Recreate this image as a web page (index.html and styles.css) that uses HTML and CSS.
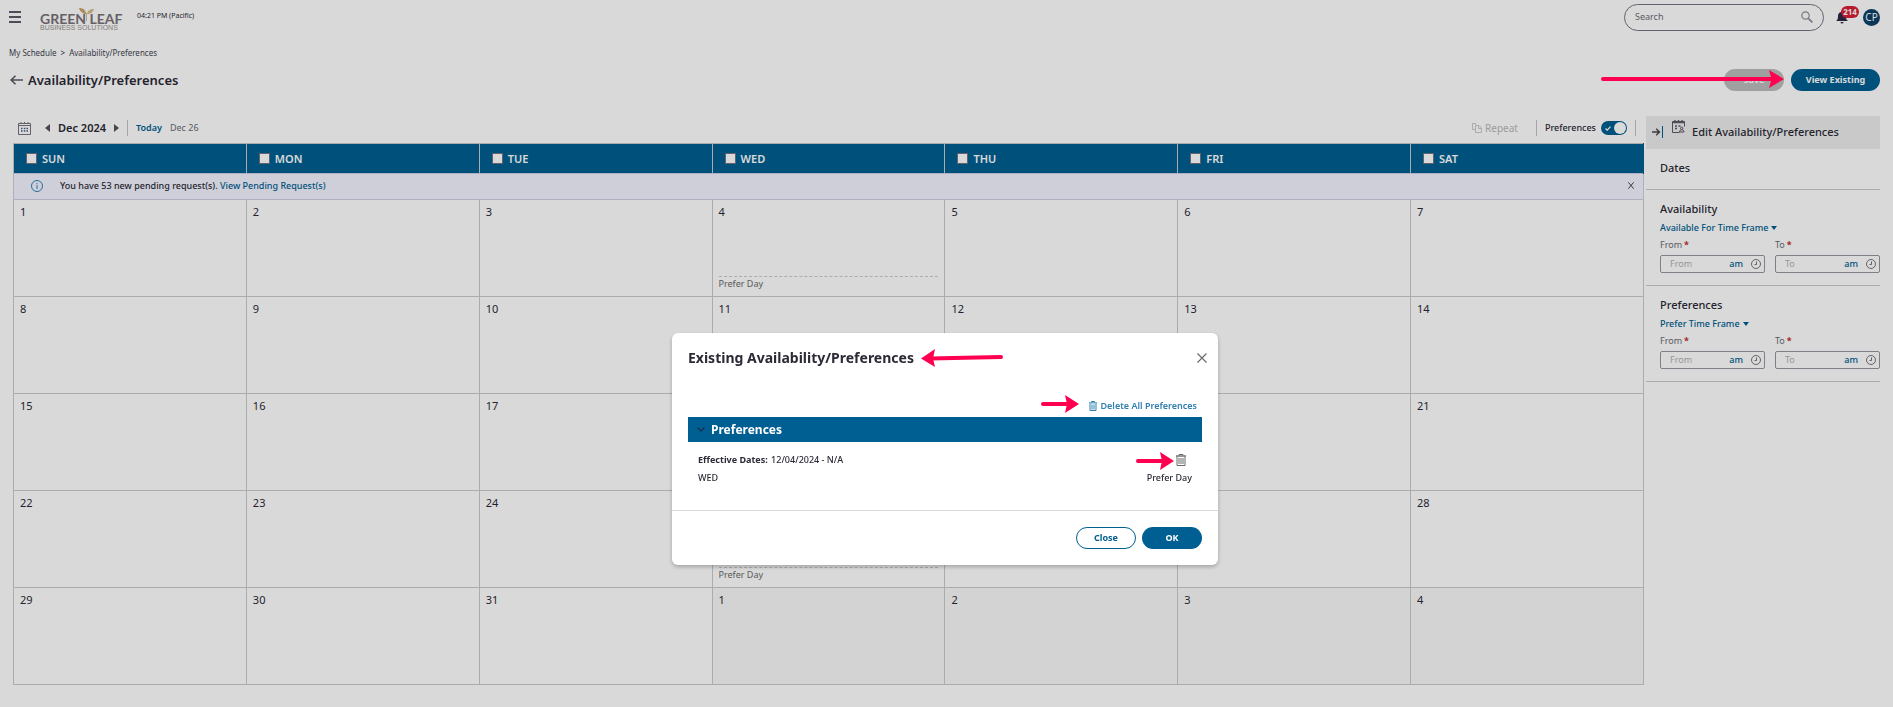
FILE: index.html
```html
<!DOCTYPE html>
<html lang="en">
<head>
    <meta charset="UTF-8">
    <title>Availability/Preferences</title>
    <link rel="stylesheet" href="styles.css">
</head>
<body>

<header class="topbar">
    <button class="icon-btn topbar__menu" type="button" aria-label="Menu">
        <svg width="12" height="12" viewBox="0 0 12 12"><path d="M0 1h12M0 6h12M0 11h12" stroke="#5d5967" stroke-width="2"/></svg>
    </button>
    <a class="logo" href="#">
        <svg class="logo__leaf" width="18" height="13" viewBox="0 0 18 13">
            <path d="M8 6C6 6 2 4 1 0c4 0 7 2 7 6z" fill="#c9a468"/>
            <path d="M9 6c0-3 3-5 7-5-1 3-3 5-7 5z" fill="#d9bd8b"/>
            <path d="M8.500 5v8" stroke="#d9bd8b"/>
        </svg>
        <span class="logo__name">GREEN LEAF</span>
        <span class="logo__sub">BUSINESS SOLUTIONS</span>
    </a>
    <span class="topbar__time">04:21 PM (Pacific)</span>

    <form class="search" action="#">
        <input class="search__input" type="text" placeholder="Search" aria-label="Search">
        <button class="icon-btn" type="submit" aria-label="Search">
            <svg width="12" height="12" viewBox="0 0 12 12" fill="none"><circle cx="4.5" cy="4.5" r="3.7" stroke="#8f8f9c" stroke-width="1.2"/><path d="M7.3 7.3l4 4" stroke="#8f8f9c" stroke-width="1.8"/></svg>
        </button>
    </form>
    <button class="icon-btn bell" type="button" aria-label="Notifications">
        <svg width="12" height="14" viewBox="0 0 12 14" fill="#2b2a44"><path d="M5 1h2v1c2 .5 3 2 3 4 0 3 .6 4 2 5H0c1.400-1 2-2 2-5 0-2 1-3.500 3-4z"/><path d="M4.500 12h3a1.500 1.500 0 0 1-3 0z"/></svg>
        <span class="bell__count">214</span>
    </button>
    <button class="avatar" type="button">CP</button>
</header>

<nav class="breadcrumb">
    <a href="#">My Schedule</a>
    <span>&gt;</span>
    <a href="#">Availability/Preferences</a>
</nav>

<div class="page-head">
    <a class="page-head__back" href="#" aria-label="Back">
        <svg width="13" height="10" viewBox="0 0 13 10" fill="none" stroke="#5d5967" stroke-width="1.6"><path d="M13 5H1.500M5.500.7L1.200 5l4.300 4.300"/></svg>
    </a>
    <h1 class="page-head__title">Availability/Preferences</h1>
    <div class="page-head__actions">
        <button class="btn btn--disabled" type="button" disabled>Save</button>
        <button class="btn btn--primary btn--wide" type="button">View Existing</button>
    </div>
</div>

<div class="layout">
    <main class="schedule">
        <div class="toolbar">
            <button class="icon-btn toolbar__calendar" type="button" aria-label="Pick month">
                <svg width="13" height="13" viewBox="0 0 13 13"><path d="M.5 1.500h12v11H.5zM.5 3.500h12" fill="none" stroke="#77737f"/><path d="M3 0v2M6.500 0v2M10 0v2" stroke="#77737f"/><path d="M3 6.500h1.500M5.800 6.500h1.500M8.500 6.500H10M3 9h1.500M5.800 9h1.500M8.500 9H10" stroke="#3e5d78" stroke-width="1.600"/></svg>
            </button>
            <button class="icon-btn" type="button" aria-label="Previous month">
                <svg width="5" height="8" viewBox="0 0 5 8"><path d="M5 0v8L0 4z" fill="#55515f"/></svg>
            </button>
            <strong class="toolbar__month">Dec 2024</strong>
            <button class="icon-btn" type="button" aria-label="Next month">
                <svg width="5" height="8" viewBox="0 0 5 8"><path d="M0 0v8l5-4z" fill="#55515f"/></svg>
            </button>
            <span class="toolbar__line"></span>
            <a class="toolbar__today" href="#">Today</a>
            <span class="toolbar__date">Dec 26</span>

            <button class="repeat" type="button" disabled>
                <svg width="10" height="10" viewBox="0 0 10 10" fill="none" stroke="#c9c9c9"><path d="M3.500 2V.5h-3v6h3"/><path d="M3.500 2.500h3.500l2.500 2.500v4.500h-6z"/><path d="M6.500 2.500v3h3"/></svg>
                Repeat
            </button>
            <span class="toolbar__line"></span>
            <label class="switch">
                Preferences
                <input class="switch__input" type="checkbox" checked>
                <span class="switch__track"><svg width="6" height="5" viewBox="0 0 6 5" fill="none" stroke="#fff" stroke-width="1.200"><path d="M.5 2.500L2.200 4.200 5.500.6"/></svg></span>
            </label>
            <span class="toolbar__line"></span>
        </div>

        <table class="calendar">
            <thead>
            <tr>
                <th><label class="calendar__day"><input type="checkbox">SUN</label></th>
                <th><label class="calendar__day"><input type="checkbox">MON</label></th>
                <th><label class="calendar__day"><input type="checkbox">TUE</label></th>
                <th><label class="calendar__day"><input type="checkbox">WED</label></th>
                <th><label class="calendar__day"><input type="checkbox">THU</label></th>
                <th><label class="calendar__day"><input type="checkbox">FRI</label></th>
                <th><label class="calendar__day"><input type="checkbox">SAT</label></th>
            </tr>
            </thead>
            <tbody>
            <tr>
                <td class="calendar__notice" colspan="7">
                    <div class="notice">
                        <svg width="12" height="12" viewBox="0 0 12 12" fill="none" stroke="#2d82b7"><circle cx="6" cy="6" r="5.500"/><path d="M6 5.200V9M6 3v1.300"/></svg>
                        <p class="notice__text">You have 53 new pending request(s). <a href="#">View Pending Request(s)</a></p>
                        <button class="icon-btn" type="button" aria-label="Dismiss">
                            <svg width="6" height="7" viewBox="0 0 6 7" stroke="#45414f"><path d="M.3.3l5.400 6.400M5.700.3L.3 6.700"/></svg>
                        </button>
                    </div>
                </td>
            </tr>
            <tr>
                <td>1</td>
                <td>2</td>
                <td>3</td>
                <td><div class="cell">4<span class="cell__pref">Prefer Day</span></div></td>
                <td>5</td>
                <td>6</td>
                <td>7</td>
            </tr>
            <tr>
                <td>8</td>
                <td>9</td>
                <td>10</td>
                <td>11</td>
                <td>12</td>
                <td>13</td>
                <td>14</td>
            </tr>
            <tr>
                <td>15</td>
                <td>16</td>
                <td>17</td>
                <td>18</td>
                <td>19</td>
                <td>20</td>
                <td>21</td>
            </tr>
            <tr>
                <td>22</td>
                <td>23</td>
                <td>24</td>
                <td><div class="cell">25<span class="cell__pref">Prefer Day</span></div></td>
                <td>26</td>
                <td>27</td>
                <td>28</td>
            </tr>
            <tr>
                <td>29</td>
                <td>30</td>
                <td>31</td>
                <td class="calendar__other">1</td>
                <td class="calendar__other">2</td>
                <td class="calendar__other">3</td>
                <td class="calendar__other">4</td>
            </tr>
            </tbody>
        </table>
    </main>

    <aside class="panel">
        <div class="panel__head">
            <button class="icon-btn" type="button" aria-label="Collapse panel">
                <svg width="12" height="12" viewBox="0 0 12 12" fill="none"><path d="M0 6h7M4.200 2.800L7.500 6 4.200 9.200" stroke="#45414f" stroke-width="1.300"/><path d="M10.500 0v12" stroke="#005f92" stroke-width="1"/></svg>
            </button>
            <svg class="panel__icon" width="13" height="13" viewBox="0 0 13 13" fill="none" stroke="#5d5967"><path d="M7.500 12.500h-7v-11h12v5"/><path d="M1 2.500h11M3 0v3M6.500 0v3M10 0v3" stroke-width="1.400"/><path d="M3 6h2M6.500 6h2M3 8.500h2" stroke-width="1.400"/><circle cx="9.700" cy="8.300" r="1.200"/><path d="M7.500 12c0-3 4.500-3 4.500 0z"/></svg>
            <h2 class="panel__title">Edit Availability/Preferences</h2>
        </div>

        <section class="panel__section panel__section--dates">
            <h3 class="panel__subtitle">Dates</h3>
        </section>

        <section class="panel__section">
            <h3 class="panel__subtitle">Availability</h3>
            <button class="dropdown" type="button">Available For Time Frame
                <svg width="6" height="4" viewBox="0 0 6 4"><path d="M0 0h6L3 4z" fill="#005f92"/></svg>
            </button>
            <div class="times">
                <div class="times__item">
                    <label class="times__label" for="availFrom">From<b>*</b></label>
                    <div class="time-field">
                        <input class="time-field__input" id="availFrom" type="text" placeholder="From">
                        <button class="time-field__ampm" type="button">am</button>
                        <svg width="10" height="10" viewBox="0 0 10 10" fill="none" stroke="#77737f"><circle cx="5" cy="5" r="4.500"/><path d="M5.500 2.500v3H3.500"/></svg>
                    </div>
                </div>
                <div class="times__item">
                    <label class="times__label" for="availTo">To<b>*</b></label>
                    <div class="time-field">
                        <input class="time-field__input" id="availTo" type="text" placeholder="To">
                        <button class="time-field__ampm" type="button">am</button>
                        <svg width="10" height="10" viewBox="0 0 10 10" fill="none" stroke="#77737f"><circle cx="5" cy="5" r="4.500"/><path d="M5.500 2.500v3H3.500"/></svg>
                    </div>
                </div>
            </div>
        </section>

        <section class="panel__section">
            <h3 class="panel__subtitle">Preferences</h3>
            <button class="dropdown" type="button">Prefer Time Frame
                <svg width="6" height="4" viewBox="0 0 6 4"><path d="M0 0h6L3 4z" fill="#005f92"/></svg>
            </button>
            <div class="times">
                <div class="times__item">
                    <label class="times__label" for="prefFrom">From<b>*</b></label>
                    <div class="time-field">
                        <input class="time-field__input" id="prefFrom" type="text" placeholder="From">
                        <button class="time-field__ampm" type="button">am</button>
                        <svg width="10" height="10" viewBox="0 0 10 10" fill="none" stroke="#77737f"><circle cx="5" cy="5" r="4.500"/><path d="M5.500 2.500v3H3.500"/></svg>
                    </div>
                </div>
                <div class="times__item">
                    <label class="times__label" for="prefTo">To<b>*</b></label>
                    <div class="time-field">
                        <input class="time-field__input" id="prefTo" type="text" placeholder="To">
                        <button class="time-field__ampm" type="button">am</button>
                        <svg width="10" height="10" viewBox="0 0 10 10" fill="none" stroke="#77737f"><circle cx="5" cy="5" r="4.500"/><path d="M5.500 2.500v3H3.500"/></svg>
                    </div>
                </div>
            </div>
        </section>
    </aside>
</div>

<div class="backdrop">
    <svg class="arrow arrow--view" width="183" height="18" viewBox="0 0 183 18"><path d="M2 9h172" stroke="#ff0050" stroke-width="4" stroke-linecap="round"/><path d="M168 0l15 9-15 9 2.500-9z" fill="#ff0050"/></svg>

    <div class="modal" role="dialog" aria-labelledby="modalTitle">
        <div class="modal__head">
            <h2 class="modal__title" id="modalTitle">Existing Availability/Preferences</h2>
            <button class="icon-btn" type="button" aria-label="Close dialog">
                <svg width="10" height="10" viewBox="0 0 10 10" stroke="#6b6b6b" stroke-width="1.200"><path d="M.5.5l9 9M9.500.5l-9 9"/></svg>
            </button>
        </div>

        <div class="modal__body">
            <button class="delete-all" type="button">
                <svg width="8" height="10" viewBox="0 0 8 10" fill="none" stroke="#2d7fb0"><path d="M0 1.900h8M2.500 1.500V.5h3v1M1 2.500v7h6v-7M3 3.500v5M5 3.500v5"/></svg>
                Delete All Preferences
            </button>
            <button class="group" type="button">
                <svg width="8" height="5" viewBox="0 0 8 5" fill="none" stroke="#12304a" stroke-width="1.300"><path d="M.5.5L4 4 7.500.5"/></svg>
                Preferences
            </button>
            <div class="entry">
                <p class="entry__row"><span><b>Effective Dates:</b> 12/04/2024 - N/A</span>
                    <button class="icon-btn entry__delete" type="button" aria-label="Delete preference">
                        <svg width="10" height="12" viewBox="0 0 10 12" fill="none" stroke="#6b6b6b"><path d="M0 2h10" stroke-width="1.400"/><path d="M3 1.500v-1h4v1M1 2.500v9h8v-9M3 4v6M5 4v6M7 4v6"/></svg>
                    </button>
                </p>
                <p class="entry__row"><span>WED</span><span>Prefer Day</span></p>
            </div>
        </div>

        <div class="modal__foot">
            <button class="btn btn--outline" type="button">Close</button>
            <button class="btn btn--primary" type="button">OK</button>
        </div>

        <svg class="arrow arrow--title" width="82" height="18" viewBox="0 0 82 18"><path d="M9 9.500L80 8" stroke="#ff0050" stroke-width="4" stroke-linecap="round"/><path d="M14 0L0 9.500 14 18l-2-8.500z" fill="#ff0050"/></svg>
        <svg class="arrow arrow--delete-all" width="38" height="18" viewBox="0 0 38 18"><path d="M2 9h28" stroke="#ff0050" stroke-width="4" stroke-linecap="round"/><path d="M24 0l14 9-14 9 2-9z" fill="#ff0050"/></svg>
        <svg class="arrow arrow--delete" width="38" height="18" viewBox="0 0 38 18"><path d="M2 9h28" stroke="#ff0050" stroke-width="4" stroke-linecap="round"/><path d="M24 0l14 9-14 9 2-9z" fill="#ff0050"/></svg>
    </div>
</div>

</body>
</html>
```
FILE: styles.css
```css
* {
    box-sizing: border-box;
}

body {
    margin: 0;
    min-height: 100vh;
    background: #fff;
    color: #2b2a36;
    font: 9px/14px "Noto Sans", "Open Sans", sans-serif;
}

h1, h2, h3, p {
    margin: 0;
}

a {
    color: #005f92;
    text-decoration: none;
}

svg {
    display: block;
    flex: none;
}

button, input {
    font: inherit;
    color: inherit;
}

button {
    padding: 0;
    border: 0;
    background: none;
    cursor: pointer;
}

/* Buttons */

.btn {
    width: 60px;
    height: 22px;
    border-radius: 11px;
    font-weight: 700;
}
.btn--wide {
    width: 89px;
}
.btn--primary {
    background: #005f92;
    color: #fff;
}
.btn--outline {
    border: 1px solid #005f92;
    background: #fff;
    color: #005f92;
}
.btn--disabled {
    background: #bdbdbd;
    color: #fff;
}

/* Top bar */

.topbar {
    display: flex;
    align-items: center;
    height: 34px;
    padding: 0 13px 0 9px;
}
.topbar__menu {
    margin-right: 19px;
}
.topbar__time {
    margin: 0 0 2px 14px;
    font-size: 7px;
}

.logo {
    position: relative;
    display: flex;
    flex-direction: column;
    width: 83px;
    padding-top: 10px;
    color: #77727a;
}
.logo__leaf {
    position: absolute;
    top: 5px;
    left: 38px;
}
.logo__name {
    font: 700 14px/11px "Lato", sans-serif;
    white-space: nowrap;
}
.logo__sub {
    color: #9a958f;
    font: 7px/8px "Liberation Sans", sans-serif;
    white-space: nowrap;
}

.search {
    display: flex;
    align-items: center;
    width: 200px;
    height: 27px;
    margin-left: auto;
    padding: 0 10px;
    border: 1px solid #77737f;
    border-radius: 14px;
}
.search__input {
    flex: 1;
    min-width: 0;
    padding: 0;
    border: 0;
    background: none;
    outline: none;
}
.search__input::placeholder {
    color: #6b6b75;
}

.bell {
    position: relative;
    margin: 0 15px 0 12px;
}
.bell__count {
    position: absolute;
    top: -4px;
    left: 5px;
    width: 18px;
    border-radius: 6px;
    background: #d81e36;
    color: #fff;
    font-size: 8px;
    font-weight: 700;
    line-height: 12px;
}

.avatar {
    width: 17px;
    height: 17px;
    border-radius: 50%;
    background: #0c4068;
    color: #fff;
    font-size: 10px;
    line-height: 17px;
}

/* Page heading */

.breadcrumb {
    display: flex;
    gap: 4px;
    padding: 12px 9px 0;
    font-size: 8px;
}
.breadcrumb a {
    color: #3f4652;
}

.page-head {
    display: flex;
    align-items: center;
    padding: 9px 13px 0 10px;
}
.page-head__title {
    margin-left: 5px;
    font-size: 13px;
    font-weight: 600;
}
.page-head__actions {
    display: flex;
    gap: 7px;
    margin-left: auto;
}

.layout {
    display: flex;
    gap: 2px;
    padding: 25px 13px 0;
}

/* Calendar */

.schedule {
    flex: 1;
    min-width: 0;
}

.toolbar {
    display: flex;
    align-items: center;
    height: 27px;
    padding: 0 0 3px 5px;
}
.toolbar__calendar {
    margin-right: 14px;
}
.toolbar__month {
    margin: 0 8px;
    font-size: 11px;
    font-weight: 600;
}
.toolbar__line {
    width: 1px;
    height: 16px;
    margin: 0 8px;
    background: #c4c4c4;
}
.toolbar__today {
    font-weight: 600;
}
.toolbar__date {
    margin-left: 8px;
    color: #6b6b75;
}

.repeat {
    display: flex;
    align-items: center;
    gap: 3px;
    margin: 0 10px 0 auto;
    color: #b9b9b9;
    font-size: 10px;
    cursor: default;
}

.switch {
    display: flex;
    align-items: center;
    gap: 5px;
    font-weight: 500;
}
.switch__input {
    position: absolute;
    opacity: 0;
}
.switch__track {
    display: flex;
    align-items: center;
    width: 26px;
    height: 14px;
    padding-left: 4px;
    border-radius: 7px;
    background: #005f92;
}
.switch__track::after {
    content: "";
    width: 12px;
    height: 12px;
    margin-left: 3px;
    border-radius: 50%;
    background: #fff;
}

.calendar {
    width: 100%;
    table-layout: fixed;
    border-collapse: collapse;
}
.calendar th {
    height: 30px;
    padding: 0 0 0 12px;
    border: 1px solid #cbcbcb;
    border-bottom: 0;
    background: #005f92;
    color: #fff;
    font-size: 11px;
    font-weight: 600;
    text-align: left;
}
.calendar th:last-child {
    border-right-color: #005f92;
}
.calendar__day {
    display: flex;
    align-items: center;
    gap: 5px;
}
.calendar__day input {
    appearance: none;
    width: 11px;
    height: 11px;
    margin: 0;
    border: 1px solid #77737f;
    background: #fff;
}
.calendar td {
    height: 97px;
    padding: 5px 6px;
    border: 1px solid #cbcbcb;
    font-size: 11px;
    vertical-align: top;
}
.calendar .calendar__notice {
    height: 26px;
    padding: 0 0 2px;
    border-color: #cfcfe6;
    background: #f4f4ff;
    vertical-align: middle;
}
.calendar .calendar__other {
    background: #f8f8f8;
}

.notice {
    display: flex;
    align-items: center;
    padding: 0 9px 0 17px;
    font-size: 9px;
    font-weight: 500;
}
.notice__text {
    flex: 1;
    margin-left: 17px;
}

.cell {
    display: flex;
    flex-direction: column;
    justify-content: space-between;
    height: 86px;
}
.cell__pref {
    border-top: 1px dashed #cbcbcb;
    color: #6b6b6b;
    font-size: 9px;
}

/* Edit panel */

.panel {
    width: 234px;
}
.panel__head {
    display: flex;
    align-items: center;
    height: 33px;
    padding: 0 0 1px 6px;
    background: #ededed;
}
.panel__icon {
    align-self: flex-start;
    margin: 4px 7px 0 8px;
}
.panel__title, .panel__subtitle {
    font-size: 11px;
    font-weight: 500;
}
.panel__section {
    padding: 12px 0 12px 14px;
    border-bottom: 1px solid #cbcbcb;
}
.panel__section--dates {
    padding-bottom: 14px;
}

.dropdown {
    display: flex;
    align-items: center;
    gap: 3px;
    margin: 5px 0 3px;
    color: #005f92;
    font-weight: 500;
}

.times {
    display: grid;
    grid-template-columns: repeat(2, minmax(0, 1fr));
    gap: 10px;
}
.times__label {
    display: block;
    margin-bottom: 3px;
    color: #6b6b75;
}
.times__label b {
    margin-left: 2px;
    color: #c0281c;
}

.time-field {
    display: flex;
    align-items: center;
    height: 18px;
    padding: 0 3px 0 9px;
    border: 1px solid #99959f;
    border-radius: 2px;
}
.time-field__input {
    flex: 1;
    min-width: 0;
    padding: 0;
    border: 0;
    background: none;
    outline: none;
}
.time-field__input::placeholder {
    color: #b0b0b0;
}
.time-field__ampm {
    margin-right: 8px;
    color: #005f92;
    font-weight: 500;
}

/* Modal */

.backdrop {
    position: fixed;
    inset: 0;
    display: flex;
    justify-content: center;
    align-items: flex-start;
    padding: 333px 3px 0 0;
    background: rgba(0, 0, 0, .15);
}

.modal {
    position: relative;
    width: 546px;
    border-radius: 6px;
    background: #fff;
    box-shadow: 0 2px 4px rgba(0, 0, 0, .25);
}
.modal__head {
    display: flex;
    justify-content: space-between;
    align-items: center;
    padding: 18px 11px 0 16px;
}
.modal__title {
    font-size: 14px;
    font-weight: 700;
}
.modal__body {
    padding: 34px 16px 25px;
}

.delete-all {
    display: flex;
    align-items: center;
    gap: 4px;
    margin: 0 5px 4px auto;
    color: #2d7fb0;
    font-weight: 600;
}

.group {
    display: flex;
    align-items: center;
    gap: 6px;
    width: 100%;
    height: 25px;
    padding-left: 9px;
    background: #005f92;
    color: #fff;
    font-size: 12px;
    font-weight: 700;
}

.entry {
    display: flex;
    flex-direction: column;
    gap: 4px;
    padding: 11px 10px 0;
    font-weight: 500;
}
.entry__row {
    display: flex;
    justify-content: space-between;
}
.entry__row b {
    margin-right: 1px;
    font-weight: 700;
}
.entry__delete {
    margin-right: 6px;
}

.modal__foot {
    display: flex;
    justify-content: flex-end;
    gap: 6px;
    padding: 16px;
    border-top: 1px solid #d9d9d9;
}

/* Pointers */

.arrow {
    position: absolute;
}
.arrow--view {
    top: 70px;
    right: 109px;
}
.arrow--title {
    top: 16px;
    left: 249px;
}
.arrow--delete-all {
    top: 62px;
    right: 139px;
}
.arrow--delete {
    top: 119px;
    right: 44px;
}
```
